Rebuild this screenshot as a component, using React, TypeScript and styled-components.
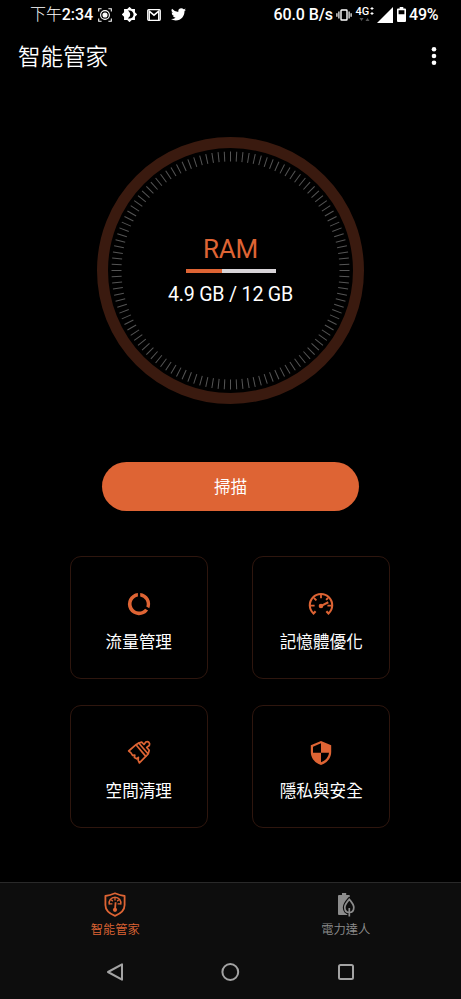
import React from 'react';
import styled, { createGlobalStyle } from 'styled-components';

const ORANGE = '#de6434';

const GlobalStyle = createGlobalStyle`
  * { box-sizing: border-box; }
  body {
    margin: 0;
    background: #000;
    color: #fff;
    font-family: Roboto, "Noto Sans CJK TC", sans-serif;
  }
  svg { display: block; flex: none; }
`;

const Screen = styled.div`
  width: 461px;
  height: 999px;
  display: flex;
  flex-direction: column;
  overflow: hidden;
  background: #000;
`;

const StatusBar = styled.header`
  height: 28px;
  padding: 1px 22px 0 30px;
  display: flex;
  justify-content: space-between;
  font-size: 16px;
  font-weight: 500;
  line-height: 27px;
  white-space: nowrap;
`;

const StatusGroup = styled.div<{ $gap: number }>`
  display: flex;
  align-items: center;
  gap: ${({ $gap }) => $gap}px;
`;

const Clock = styled.span`
  width: 63px;
  margin-right: -5px;
  letter-spacing: -0.1px;
`;

const Cjk = styled.span`
  font-weight: 300;
`;

const Rate = styled.span`
  width: 59px;
  letter-spacing: -0.1px;
`;

const Percent = styled.span`
  width: 30px;
  letter-spacing: -0.2px;
`;

const Network = styled.span`
  display: flex;
  flex-direction: column;
  width: 18px;
  height: 17px;
`;

const NetworkType = styled.span`
  display: flex;
  gap: 1px;
  font-size: 11px;
  line-height: 11px;
`;

const TitleBar = styled.div`
  height: 56px;
  padding: 0 22px 0 18px;
  display: flex;
  align-items: center;
  justify-content: space-between;
`;

const Title = styled.h1`
  margin: 0;
  padding-top: 1px;
  font-size: 22.5px;
  line-height: 32px;
  font-weight: 350;
`;

const MenuButton = styled.button`
  padding: 0;
  border: 0;
  background: none;
  color: inherit;
`;

const Dial = styled.section`
  width: 267px;
  height: 267px;
  margin: 53px auto 0;
  display: grid;
  place-items: center;
  > * { grid-area: 1 / 1; }
`;

const DialReadout = styled.div`
  display: flex;
  flex-direction: column;
  align-items: center;
`;

const DialLabel = styled.div`
  color: ${ORANGE};
  font-size: 26px;
  line-height: 30px;
  letter-spacing: -0.3px;
`;

const Meter = styled.div`
  width: 90px;
  height: 4px;
  margin: 5px 0 9px;
  background: #d8d4d8;
`;

const MeterFill = styled.div`
  height: 100%;
  background: ${ORANGE};
`;

const DialValue = styled.div`
  font-size: 19.6px;
  line-height: 26px;
  letter-spacing: -0.2px;
`;

const ScanButton = styled.button`
  width: 257px;
  height: 49px;
  flex: none;
  margin: 57.5px auto 0;
  padding: 0 0 1px;
  border: 0;
  border-radius: 25px;
  background: ${ORANGE};
  color: #fff;
  font: inherit;
  font-size: 16.5px;
`;

const CardGrid = styled.main`
  display: grid;
  grid-template-columns: 138px 138px;
  grid-auto-rows: 122.5px;
  gap: 26.5px 44.5px;
  justify-content: center;
  margin: 45.5px 1px 0 0;
`;

const Card = styled.div`
  display: flex;
  flex-direction: column;
  align-items: center;
  padding-top: 34px;
  border: 1px solid #2e160e;
  border-radius: 11px;
  color: ${ORANGE};
`;

const CardLabel = styled.div`
  margin-top: 13.5px;
  color: #fff;
  font-size: 16.6px;
  line-height: 24px;
`;

const Footer = styled.footer`
  height: 117px;
  margin-top: auto;
  border-top: 1px solid #292929;
  background: #0d0d0d;
`;

const Tabs = styled.nav`
  display: grid;
  grid-template-columns: 1fr 1fr;
  height: 62px;
`;

const Tab = styled.div<{ $active?: boolean }>`
  display: flex;
  flex-direction: column;
  align-items: center;
  padding-top: 9px;
  color: ${({ $active }) => ($active ? ORANGE : '#8c8c8c')};
`;

const TabLabel = styled.span`
  margin-top: 4px;
  font-size: 12.3px;
  line-height: 18px;
  font-weight: 350;
`;

const SystemNav = styled.div`
  display: grid;
  grid-template-columns: repeat(3, 1fr);
  justify-items: center;
  align-items: center;
  width: 346px;
  height: 54px;
  margin: 0 auto;
  color: #a3a3a3;
`;

const ScreenshotIcon = () => (
  <svg width="14" height="14" viewBox="0 0 14 14" fill="none" stroke="#fff" strokeWidth="1.1">
    <path d="M.7 3.6V.7h2.9M10.4.7h2.9v2.9M13.3 10.4v2.9h-2.9M3.6 13.3H.7v-2.9" />
    <circle cx="7" cy="7" r="4.4" />
    <circle cx="7" cy="7" r="2" fill="#fff" />
  </svg>
);

const BrightnessIcon = () => (
  <svg width="15" height="15" viewBox="1 1 22 22" fill="#fff">
    <path
      fillRule="evenodd"
      d="M20 8.69V4h-4.69L12 .69 8.69 4H4v4.69L.69 12 4 15.31V20h4.69L12 23.31 15.31 20H20v-4.69L23.31 12 20 8.69zM12 18c-.89 0-1.74-.2-2.5-.55C11.56 16.5 13 14.42 13 12s-1.44-4.5-3.5-5.45C10.26 6.2 11.11 6 12 6c3.31 0 6 2.69 6 6s-2.69 6-6 6z"
    />
  </svg>
);

const MailIcon = () => (
  <svg width="14" height="12" viewBox="0 0 14 12" fill="none" stroke="#fff">
    <rect x=".7" y=".7" width="12.6" height="10.6" rx="1" strokeWidth="1.2" />
    <path d="M2.2 11V2.2L7 6.2l4.800-4V11" strokeWidth="1.500" />
  </svg>
);

const BirdIcon = () => (
  <svg width="15" height="13" viewBox="0 2.5 24 19.6" fill="#fff">
    <path d="M23.95 4.57a10 10 0 0 1-2.82.78 4.96 4.96 0 0 0 2.16-2.73 9.9 9.9 0 0 1-3.12 1.19 4.92 4.92 0 0 0-8.38 4.48A13.93 13.93 0 0 1 1.64 3.16a4.92 4.92 0 0 0 1.52 6.57 4.9 4.9 0 0 1-2.23-.61v.06a4.92 4.92 0 0 0 3.95 4.83 5 5 0 0 1-2.21.08 4.94 4.94 0 0 0 4.6 3.42A9.87 9.87 0 0 1 0 19.54a13.94 13.94 0 0 0 7.55 2.21c9.05 0 14-7.5 14-13.98 0-.21 0-.42-.02-.63a9.94 9.94 0 0 0 2.42-2.57z" />
  </svg>
);

const VibrateIcon = () => (
  <svg width="16" height="12" viewBox="0 0 16 12" fill="none" stroke="#fff" strokeWidth="1.2">
    <rect x="5" y="1" width="6" height="10" rx=".6" strokeWidth="1.4" />
    <path d="M2.9 2.5v7M13.1 2.5v7M.9 4.2v3.6M15.1 4.2v3.6" />
  </svg>
);

const PlusStack = () => (
  <svg width="4" height="10" viewBox="0 0 4 10" stroke="#fff" strokeWidth="1">
    <path d="M.500 2.500h3M2 1v3M.500 7.500h3M2 6v3" />
  </svg>
);

const DataArrows = () => (
  <svg width="16" height="5" viewBox="0 0 16 5" fill="#555">
    <path d="M3.5 1h4l-2 3zM9.5 4h4l-2-3z" />
  </svg>
);

const SignalIcon = () => (
  <svg width="16" height="16" viewBox="0 0 16 16" fill="#fff">
    <path d="M16 0v16H0z" />
  </svg>
);

const BatteryIcon = () => (
  <svg width="9" height="15" viewBox="0 0 9 15" fill="#fff">
    <path fillRule="evenodd" d="M2.7 0h3.6v1.4H8q1 0 1 1V14q0 1-1 1H1q-1 0-1-1V2.4q0-1 1-1h1.7zM1.6 3.2v4h5.8v-4z" />
  </svg>
);

const MoreIcon = () => (
  <svg width="10" height="20" viewBox="0 0 10 20" fill="#fff">
    <circle cx="5" cy="3.3" r="2.3" />
    <circle cx="5" cy="10" r="2.3" />
    <circle cx="5" cy="16.7" r="2.3" />
  </svg>
);

const tickAngles = Array.from({ length: 120 }, (_, i) => i * 3);

const DialFace = () => (
  <svg width="267" height="267" viewBox="-133.5 -133.5 267 267" fill="none">
    <circle r="128" stroke="#3a1a0f" strokeWidth="11" />
    {tickAngles.map((angle) => (
      <path key={angle} d="M0-119v10" transform={`rotate(${angle})`} stroke="#555" strokeWidth="1" />
    ))}
  </svg>
);

const DataUsageIcon = () => (
  <svg width="26" height="26" viewBox="0 0 26 26" fill="currentColor">
    <path d="M14.2 2v3.5a7.6 7.6 0 0 1 6.1 10l3 1.7A11.1 11.1 0 0 0 14.2 2zM19.1 17.7A7.6 7.6 0 1 1 11.9 5.5V2a11.1 11.1 0 1 0 10.2 17.4z" />
  </svg>
);

const GaugeIcon = () => (
  <svg width="26" height="26" viewBox="0 0 26 26" fill="none" stroke="currentColor" strokeWidth="2.1">
    <path d="M7.6 20.2l-2.1 2.3a11.2 11.2 0 1 1 15 0l-2.1-2.3" />
    <path d="M13 3v4.3M6 7l2.4 2.4M20 7l-1.9 1.9M2.4 14.6h4.2M19.4 14.6h4.2" strokeWidth="1.8" />
    <path d="M13.3 14.9l7-3.6" strokeWidth="2.1" />
    <circle cx="13" cy="15" r="2.3" fill="currentColor" stroke="none" />
  </svg>
);

const BrushIcon = () => (
  <svg width="26" height="26" viewBox="0 0 26 26" fill="none" stroke="currentColor" strokeWidth="1.7" strokeLinejoin="round">
    <path d="M10 4.7L2.7 11q2.800 1.800 3.900 4.300l2.200-.3-.4 2.500 2.300 1.300 1.700-1.500-.2 3 1.200 2.600 6.400-6.500z" />
    <path d="M10 4.700l2.700-1.700 9.500 11-2.400 2.400M12.700 3l3-.9 2.300 2.400 1.800-2.400q1.800-1 3.100.3t.4 3.100l-2.600 1.900 2.500 2.800-1 3.800" />
  </svg>
);

const ShieldIcon = () => (
  <svg width="26" height="26" viewBox="0 0 26 26" fill="currentColor">
    <path fillRule="evenodd" d="M13 .9L2.8 5.3V12c0 6.1 4.300 11.200 10.200 12.900C18.900 23.200 23.200 18.100 23.200 12V5.300zM13 3.300v9.500h8c-.6 4.500-3.600 8.100-8 9.500v-9.500H5V6.700z" />
  </svg>
);

const ShieldGaugeIcon = () => (
  <svg width="22" height="25" viewBox="0 0 22 25" fill="none" stroke="currentColor">
    <path d="M11 1.3Q16 3.5 20.6 4v9c0 5-3.8 8.600-9.600 10.800C5.200 21.600 1.400 18 1.400 13V4Q6 3.500 11 1.300z" strokeWidth="1.8" strokeLinejoin="round" />
    <path d="M5.300 12.600a5.900 5.900 0 1 1 11.400 0" strokeWidth="1.500" />
    <path d="M11 6v2.500M5.700 11.800h2.700M13.600 11.800h2.700M7.300 7.700l1.500 1.600M14.700 7.700l-1.500 1.600" strokeWidth="1.300" />
    <path d="M11.600 10.200L11 18" strokeWidth="1.800" />
    <circle cx="11" cy="17.800" r="2.100" fill="currentColor" stroke="none" />
  </svg>
);

const BatteryLeafIcon = () => (
  <svg width="18" height="25" viewBox="0 0 18 25">
    <path d="M5 1h4.200v2H12q.9 0 .9 1v19H2q-1 0-1-1V4q0-1 1-1h3z" fill="currentColor" />
    <path d="M12.300 7.400c-3.300 3.700-4.500 6-4.500 8.100 0 3 1.800 5 4.500 5s4.500-2 4.500-5c0-2.100-1.200-4.400-4.500-8.100z" fill="#0d0d0d" stroke="#0d0d0d" strokeWidth="4" />
    <path d="M12.300 20v5" stroke="#0d0d0d" strokeWidth="4" />
    <path d="M12.300 7.400c-3.300 3.700-4.500 6-4.500 8.100 0 3 1.800 5 4.500 5s4.500-2 4.500-5c0-2.100-1.200-4.400-4.500-8.100zM12.300 16v8.500" fill="none" stroke="currentColor" strokeWidth="1.700" />
  </svg>
);

const BackIcon = () => (
  <svg width="18" height="20" viewBox="0 0 18 20" fill="none" stroke="currentColor" strokeWidth="2" strokeLinejoin="round">
    <path d="M16 2.300v15.400L2 10z" />
  </svg>
);

const HomeIcon = () => (
  <svg width="20" height="20" viewBox="0 0 20 20" fill="none" stroke="currentColor" strokeWidth="2">
    <circle cx="10.300" cy="10" r="7.900" />
  </svg>
);

const RecentIcon = () => (
  <svg width="18" height="18" viewBox="0 0 18 18" fill="none" stroke="currentColor" strokeWidth="2">
    <rect x="2" y="2" width="14" height="14" rx="1.500" />
  </svg>
);

const cards = [
  { label: '流量管理', Icon: DataUsageIcon },
  { label: '記憶體優化', Icon: GaugeIcon },
  { label: '空間清理', Icon: BrushIcon },
  { label: '隱私與安全', Icon: ShieldIcon },
];

export default function App() {
  const usedPercent = (4.9 / 12) * 100;
  return (
    <Screen>
      <GlobalStyle />
      <StatusBar>
        <StatusGroup $gap={10}>
          <Clock><Cjk>下午</Cjk>2:34</Clock>
          <ScreenshotIcon />
          <BrightnessIcon />
          <MailIcon />
          <BirdIcon />
        </StatusGroup>
        <StatusGroup $gap={3.5}>
          <Rate>60.0 B/s</Rate>
          <VibrateIcon />
          <Network>
            <NetworkType>4G<PlusStack /></NetworkType>
            <DataArrows />
          </Network>
          <SignalIcon />
          <BatteryIcon />
          <Percent>49%</Percent>
        </StatusGroup>
      </StatusBar>
      <TitleBar>
        <Title>智能管家</Title>
        <MenuButton aria-label="更多"><MoreIcon /></MenuButton>
      </TitleBar>
      <Dial>
        <DialFace />
        <DialReadout>
          <DialLabel>RAM</DialLabel>
          <Meter><MeterFill style={{ width: `${usedPercent}%` }} /></Meter>
          <DialValue>4.9 GB / 12 GB</DialValue>
        </DialReadout>
      </Dial>
      <ScanButton>掃描</ScanButton>
      <CardGrid>
        {cards.map(({ label, Icon }) => (
          <Card key={label}>
            <Icon />
            <CardLabel>{label}</CardLabel>
          </Card>
        ))}
      </CardGrid>
      <Footer>
        <Tabs>
          <Tab $active><ShieldGaugeIcon /><TabLabel>智能管家</TabLabel></Tab>
          <Tab><BatteryLeafIcon /><TabLabel>電力達人</TabLabel></Tab>
        </Tabs>
        <SystemNav>
          <BackIcon />
          <HomeIcon />
          <RecentIcon />
        </SystemNav>
      </Footer>
    </Screen>
  );
}
